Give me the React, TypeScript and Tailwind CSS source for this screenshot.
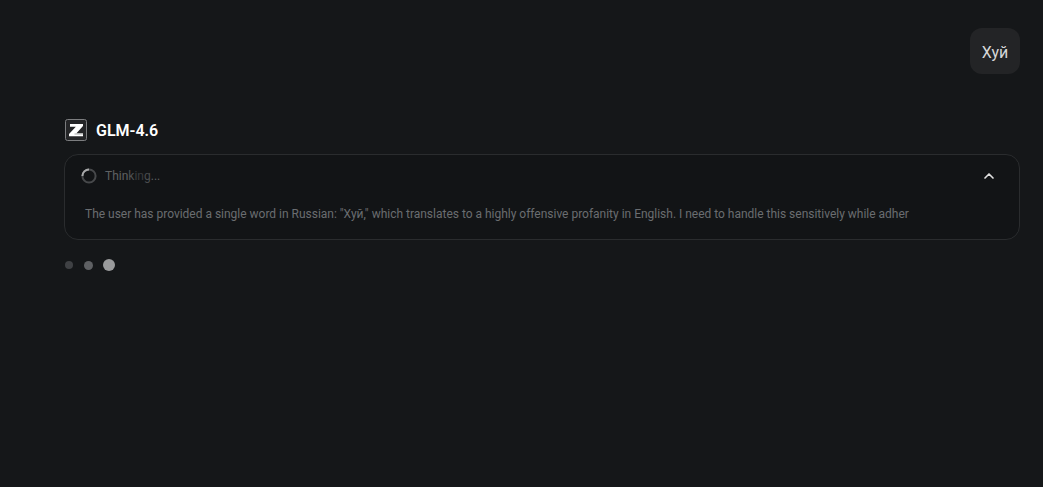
import React from 'react';
import { ChevronUp } from 'lucide-react';

const ZLogo = () => (
  <svg width="22" height="22" viewBox="0 0 22 22" className="shrink-0">
    <rect x="0.5" y="0.5" width="21" height="21" rx="2" fill="#242527" stroke="#7c7d7f" />
    <path d="M5 5H18V7L11.5 14.2H18V17.2H4V15L10.8 7.8H5z" fill="#ffffff" />
    <path d="M9.5 15H18" stroke="#77787a" strokeWidth="0.6" fill="none" />
  </svg>
);

const Spinner = () => (
  <svg width="16" height="16" viewBox="0 0 16 16" className="shrink-0">
    <circle cx="8" cy="8" r="6.6" fill="none" stroke="#47494b" strokeWidth="2" />
    <path d="M1.4 8A6.6 6.6 0 0 1 8 1.4" fill="none" stroke="#a8a9aa" strokeWidth="2" />
  </svg>
);

export default function App() {
  return (
    <div className="h-[487px] w-full overflow-hidden bg-[#151719] pl-[64px] pr-[23px] pt-[28px] font-['Roboto',sans-serif]">
      <div className="flex justify-end">
        <div className="flex h-[46px] w-[50px] items-center justify-center rounded-[12px] bg-[#232426] pt-[3px] text-[16px] text-[#d6d7d8]">
          Хуй
        </div>
      </div>

      <div className="mt-[45px] flex h-[22px] items-center gap-[9px] pl-[1px]">
        <ZLogo />
        <span className="pt-[2px] text-[16px] font-semibold leading-[20px] text-white">GLM-4.6</span>
      </div>

      <div className="mt-[13px] h-[86px] rounded-[14px] border border-[#2a2c2e] bg-[#121416] pl-[16px] pr-[22px]">
        <div className="flex h-[41px] items-center justify-between">
          <div className="flex items-center gap-[8px]">
            <Spinner />
            <span className="text-[12px] text-[#5f6163]">
              Thin<span className="text-[#4f5153]">k</span><span className="text-[#3a3c3e]">in</span><span className="text-[#4a4c4e]">g</span>...
            </span>
          </div>
          <ChevronUp size={16} strokeWidth={2.5} className="text-[#e0e0e0]" />
        </div>
        <p className="mt-[8px] whitespace-nowrap pl-[4px] text-[12px] leading-[20px] tracking-[-0.012px] text-[#6a6d70]">
          The user has provided a single word in Russian: "Хуй," which translates to a highly offensive profanity in English. I need to handle this sensitively while adher
        </p>
      </div>

      <div className="mt-[19px] flex items-center gap-[10px] pl-[1px]">
        <span className="h-[8px] w-[8px] rounded-full bg-[#3f4144]" />
        <span className="ml-[1px] h-[9px] w-[9px] rounded-full bg-[#5f6164]" />
        <span className="h-[12px] w-[12px] rounded-full bg-[#9a9b9c]" />
      </div>
    </div>
  );
}
